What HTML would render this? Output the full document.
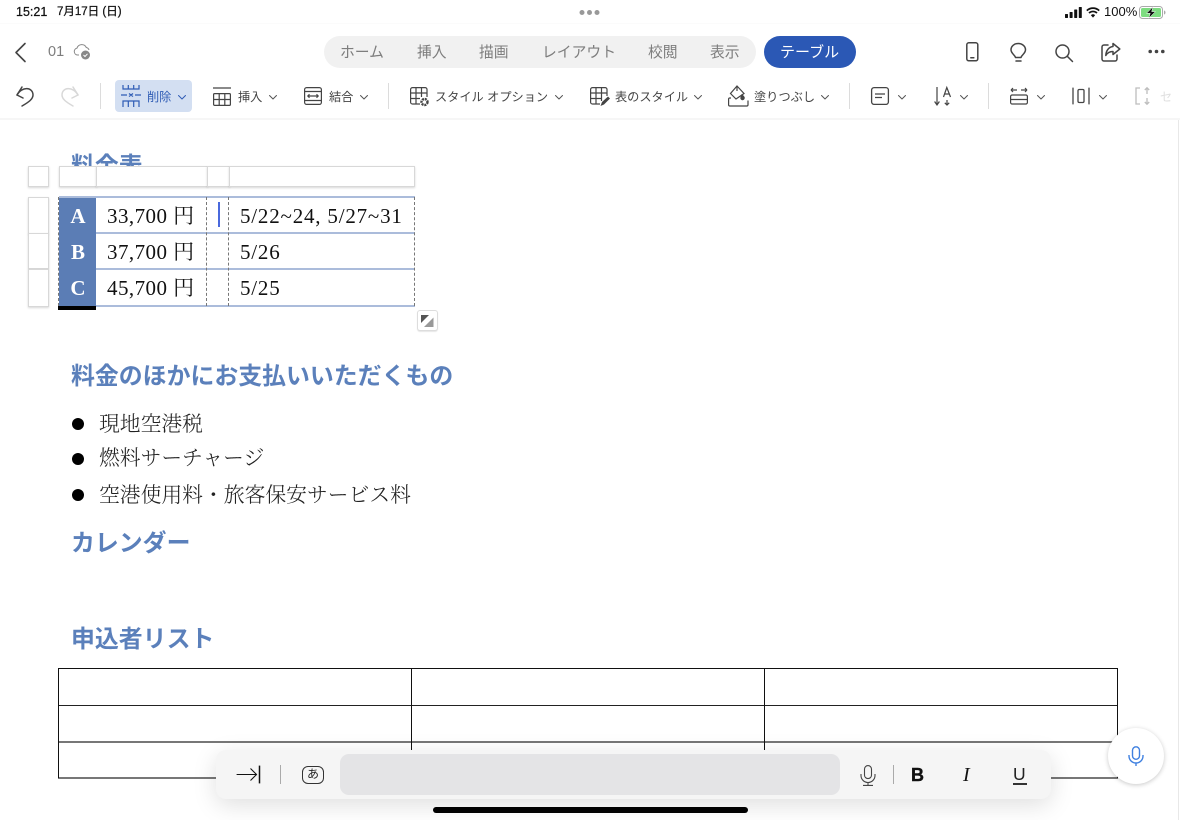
<!DOCTYPE html>
<html lang="ja">
<head>
<meta charset="utf-8">
<style>
html,body{margin:0;padding:0;width:1180px;height:820px;overflow:hidden;background:#fff}
body{position:relative;font-family:"Liberation Sans","Noto Sans CJK JP",sans-serif}
.a{position:absolute;white-space:nowrap}
svg{position:absolute;overflow:visible}
.tab{position:absolute;top:44px;font-size:14.8px;color:#7d7d7d;line-height:18px;white-space:nowrap}
.tb{position:absolute;top:88.5px;font-size:12.2px;color:#444;line-height:16px;white-space:nowrap}
.sep{position:absolute;top:83px;width:1px;height:26px;background:#dcdcdc}
.h{position:absolute;left:71px;font-size:23.9px;font-weight:700;color:#5b80bb;line-height:30px;white-space:nowrap}
.s{position:absolute;font-family:"Liberation Serif","Noto Serif CJK JP",serif;color:#111;white-space:nowrap}
.cell{font-size:21px;line-height:28px}
.amt{letter-spacing:.45px}
.li{left:99px;font-size:20.8px;line-height:28px;font-weight:300;color:#222}
.dot{position:absolute;left:72px;width:12px;height:12px;border-radius:50%;background:#000}
.hd{position:absolute;background:#fff;border:1px solid #d8d8d8;box-sizing:border-box;box-shadow:0 1px 2px rgba(0,0,0,.16)}
.ch{fill:none;stroke:#555;stroke-width:1;stroke-linecap:round;stroke-linejoin:round}
.ic{fill:none;stroke:#444;stroke-width:1.5;stroke-linecap:round;stroke-linejoin:round}
.hl{position:absolute;height:2px;background:#abbcdb}
</style>
</head>
<body>
<!-- document -->
<div class="h" style="top:152px">料金表</div>
<div class="a" style="left:0;top:23px;width:1180px;height:1px;background:#fbfbfb"></div>
<div class="a" style="left:0;top:118px;width:1180px;height:2px;background:#f6f6f6"></div>
<div class="a" style="left:1178px;top:120px;width:1px;height:700px;background:#e8e8e8"></div>

<!-- header strips -->
<div class="hd" style="left:28px;top:166px;width:21px;height:21px"></div>
<div class="hd" style="left:59px;top:166px;width:38px;height:21px"></div>
<div class="hd" style="left:96px;top:166px;width:112px;height:21px"></div>
<div class="hd" style="left:207px;top:166px;width:23px;height:21px"></div>
<div class="hd" style="left:229px;top:166px;width:186px;height:21px"></div>
<div class="hd" style="left:28px;top:197px;width:21px;height:37px"></div>
<div class="hd" style="left:28px;top:233px;width:21px;height:36px"></div>
<div class="hd" style="left:28px;top:269px;width:21px;height:38px"></div>

<!-- pricing table -->
<div class="a" style="left:59px;top:197px;width:37px;height:109px;background:#5b7db5"></div>
<div class="a" style="left:58px;top:306px;width:38px;height:4px;background:#000"></div>
<div class="hl" style="left:59px;top:196px;width:356px"></div>
<div class="hl" style="left:96px;top:232px;width:319px"></div>
<div class="hl" style="left:96px;top:268px;width:319px"></div>
<div class="hl" style="left:96px;top:305px;width:319px"></div>
<div class="a" style="left:58px;top:197px;height:109px;border-left:1px dashed #777"></div>
<div class="a" style="left:206px;top:197px;height:109px;border-left:1px dashed #777"></div>
<div class="a" style="left:228px;top:197px;height:109px;border-left:1px dashed #777"></div>
<div class="a" style="left:414px;top:197px;height:109px;border-left:1px dashed #777"></div>
<div class="a" style="left:218px;top:202px;width:2px;height:25px;background:#4a69dd"></div>

<div class="s cell" style="left:68px;top:202px;width:20px;text-align:center;color:#fff;font-weight:700">A</div>
<div class="s cell" style="left:68px;top:238px;width:20px;text-align:center;color:#fff;font-weight:700">B</div>
<div class="s cell" style="left:68px;top:274px;width:20px;text-align:center;color:#fff;font-weight:700">C</div>
<div class="s cell amt" style="left:107px;top:202px">33,700 円</div>
<div class="s cell amt" style="left:107px;top:238px">37,700 円</div>
<div class="s cell amt" style="left:107px;top:274px">45,700 円</div>
<div class="s cell" style="left:240px;top:202px;letter-spacing:.8px">5/22~24, 5/27~31</div>
<div class="s cell" style="left:240px;top:238px;letter-spacing:.8px">5/26</div>
<div class="s cell" style="left:240px;top:274px;letter-spacing:.8px">5/25</div>

<!-- resize handle -->
<div class="a" style="left:417px;top:310px;width:21px;height:21px;box-sizing:border-box;border:1px solid #ddd;border-radius:3px;box-shadow:0 1px 1px rgba(0,0,0,.1);background:#fff"></div>
<svg style="left:421px;top:315px" width="13" height="12"><path d="M0 0H8L0 8Z" fill="#555"/><path d="M12.500 2.500V12H3Z" fill="#999"/></svg>

<div class="h" style="top:362px">料金のほかにお支払いいただくもの</div>
<div class="dot" style="left:72px;top:418px"></div>
<div class="dot" style="left:72px;top:453px"></div>
<div class="dot" style="left:72px;top:489px"></div>
<div class="s li" style="top:411px">現地空港税</div>
<div class="s li" style="top:445px">燃料サーチャージ</div>
<div class="s li" style="top:482px">空港使用料・旅客保安サービス料</div>
<div class="h" style="top:529px">カレンダー</div>
<div class="h" style="top:625px">申込者リスト</div>

<!-- applicant table -->
<div class="a" style="left:58px;top:668px;width:1060px;height:1px;background:#111"></div>
<div class="a" style="left:58px;top:705px;width:1060px;height:1px;background:#222"></div>
<div class="a" style="left:58px;top:741px;width:1060px;height:2px;background:#777"></div>
<div class="a" style="left:58px;top:777px;width:1060px;height:2px;background:#777"></div>
<div class="a" style="left:58px;top:668px;width:1px;height:110px;background:#111"></div>
<div class="a" style="left:411px;top:668px;width:1px;height:110px;background:#111"></div>
<div class="a" style="left:764px;top:668px;width:1px;height:110px;background:#111"></div>
<div class="a" style="left:1117px;top:668px;width:1px;height:110px;background:#111"></div>

<!-- status bar -->
<div class="a" style="left:16px;top:4px;font-size:12.5px;line-height:16px;color:#111;-webkit-text-stroke:.25px #111">15:21</div>
<div class="a" style="left:57px;top:4px;font-size:11.5px;line-height:16px;color:#111;-webkit-text-stroke:.25px #111">7月17日 (日)</div>
<svg style="left:579px;top:9px" width="22" height="7"><circle cx="3" cy="3.5" r="2.5" fill="#999"/><circle cx="10.5" cy="3.5" r="2.5" fill="#999"/><circle cx="18" cy="3.5" r="2.5" fill="#999"/></svg>
<svg style="left:1065px;top:7px" width="17" height="11"><rect x="0" y="7" width="3" height="4" rx=".6" fill="#111"/><rect x="4.6" y="5" width="3" height="6" rx=".6" fill="#111"/><rect x="9.2" y="2.5" width="3" height="8.5" rx=".6" fill="#111"/><rect x="13.8" y="0" width="3" height="11" rx=".6" fill="#111"/></svg>
<svg style="left:1086px;top:7px" width="14" height="11"><path d="M.8 3.6C4.4.3 9.6.3 13.2 3.6M3 6C5.3 3.9 8.7 3.9 11 6" fill="none" stroke="#111" stroke-width="1.7"/><path d="M4.9 8.2C6.1 7 7.9 7 9.1 8.2L7 10.6Z" fill="#111"/></svg>
<div class="a" style="left:1104px;top:4px;font-size:13px;line-height:16px;color:#111">100%</div>
<svg style="left:1139px;top:6px" width="27" height="13"><rect x=".5" y=".5" width="23" height="12" rx="3" fill="none" stroke="#aaa"/><rect x="2" y="2" width="20" height="9" rx="1.6" fill="#7ddc80"/><path d="M25 4.500C26 4.800 26.500 5.500 26.500 6.500S26 8.200 25 8.500Z" fill="#aaa"/><path d="M14 .8L7.500 7.300H11.200L9.800 12.200L16.500 5.600H12.700Z" fill="#111" stroke="#fff" stroke-width=".5"/></svg>

<!-- title bar -->
<svg style="left:14px;top:42px" width="13" height="21"><path d="M11 1.500L2 10.500L11 19.500" fill="none" stroke="#444" stroke-width="1.6" stroke-linecap="round" stroke-linejoin="round"/></svg>
<div class="a" style="left:48px;top:43px;font-size:14.500px;line-height:18px;color:#7d7d7d">01</div>
<svg style="left:73px;top:43px" width="19" height="18"><path d="M6 12H4.500A3.500 3.500 0 0 1 4 5.100A5 5 0 0 1 13.300 4.500A3.500 3.500 0 0 1 16 7" fill="none" stroke="#888" stroke-width="1"/><circle cx="12.500" cy="12" r="4.500" fill="#888"/><path d="M10.500 12L12 13.500L14.500 10.800" fill="none" stroke="#fff" stroke-width="1"/></svg>

<div class="a" style="left:324px;top:36px;width:432px;height:32px;border-radius:16px;background:#f1f1f1"></div>
<div class="tab" style="left:340px">ホーム</div>
<div class="tab" style="left:417px">挿入</div>
<div class="tab" style="left:479px">描画</div>
<div class="tab" style="left:542px">レイアウト</div>
<div class="tab" style="left:648px">校閲</div>
<div class="tab" style="left:710px">表示</div>
<div class="a" style="left:764px;top:36px;width:92px;height:32px;border-radius:16px;background:#2b58b5"></div>
<div class="tab" style="left:780px;color:#fff;font-size:15px">テーブル</div>

<svg class="ic" style="left:966px;top:42px" width="14" height="20"><rect x=".8" y=".8" width="11" height="18" rx="2"/><path d="M4.800 15.800H7.800"/></svg>
<svg class="ic" style="left:1010px;top:43px" width="17" height="20"><path d="M5.500 14.500C5 12 1 10.500 1 6.800A7.200 6.300 0 0 1 15.500 6.800C15.500 10.500 11.500 12 11 14.500Z"/><path d="M6 18H11"/></svg>
<svg class="ic" style="left:1055px;top:44px" width="18" height="18"><circle cx="7.500" cy="7.500" r="6.500"/><path d="M12.300 12.300L17.500 17.500"/></svg>
<svg class="ic" style="left:1101px;top:42px" width="20" height="20"><path d="M7 3H3A2 2 0 0 0 1 5V17A2 2 0 0 0 3 19H14A2 2 0 0 0 16 17V13"/><path d="M12 1.500L18.800 7L12 12.500V9.500C9 9.500 6.500 10.500 4.800 13.500C5 9 7.500 5 12 4.500Z"/></svg>
<svg style="left:1148px;top:49px" width="17" height="5"><circle cx="2.200" cy="2.500" r="1.800" fill="#444"/><circle cx="8.500" cy="2.500" r="1.800" fill="#444"/><circle cx="14.800" cy="2.500" r="1.800" fill="#444"/></svg>

<!-- ribbon -->
<svg class="ic" style="left:15px;top:85px" width="20" height="22"><path d="M7 2L2 10L8 13"/><path d="M2 10C7 1 18 2 18 10C18 14 14 17 7 21"/></svg>
<svg class="ic" style="left:60px;top:85px;stroke:#d8d8d8" width="20" height="22"><path d="M13 2L18 10L12 13"/><path d="M18 10C13 1 2 2 2 10C2 14 6 17 13 21"/></svg>
<div class="sep" style="left:100px"></div>

<div class="a" style="left:115px;top:80px;width:77px;height:32px;border-radius:4px;background:#d3dff2"></div>
<svg style="left:121px;top:84px" width="20" height="24" fill="none" stroke="#2f5cb5" stroke-width="1.200"><path d="M2 1V5H18V1M7.300 1V5M12.700 1V5"/><path d="M0 11H6M14 11H20M8 9.500L12 12.500M12 9.500L8 12.500"/><path d="M2 23V17H18V23M7.300 17V23M12.700 17V23"/></svg>
<div class="tb" style="left:147px;color:#2f5cb5">削除</div>
<svg class="ch" style="left:178px;top:95px;stroke:#2f5cb5" width="8" height="5"><path d="M.5 .5L4 4L7.500 .5"/></svg>

<svg style="left:213px;top:87px" width="18" height="19" fill="none" stroke="#444" stroke-width="1.200"><path d="M0 1H18"/><rect x=".6" y="6.600" width="16.800" height="11.800" rx="1"/><path d="M.6 12.500H17.400M6.200 6.600V18.400M11.800 6.600V18.400"/></svg>
<div class="tb" style="left:238px">挿入</div>
<svg class="ch" style="left:269px;top:95px" width="8" height="5"><path d="M.5 .5L4 4L7.500 .5"/></svg>

<svg style="left:304px;top:87px" width="18" height="18" fill="none" stroke="#444" stroke-width="1.200"><rect x=".6" y=".6" width="16.800" height="16.800" rx="2"/><path d="M.6 4.500H17.400M.6 13.500H17.400M4 9H14M5.500 7.300L3.800 9L5.500 10.700M12.500 7.300L14.200 9L12.500 10.700"/></svg>
<div class="tb" style="left:329px">結合</div>
<svg class="ch" style="left:360px;top:95px" width="8" height="5"><path d="M.5 .5L4 4L7.500 .5"/></svg>
<div class="sep" style="left:388px"></div>

<svg style="left:410px;top:87px" width="20" height="20" fill="none" stroke="#444" stroke-width="1.200"><path d="M10 17H2.500A1.900 1.900 0 0 1 .6 15.100V2.500A1.900 1.900 0 0 1 2.500 .6H15.100A1.900 1.900 0 0 1 17 2.500V10"/><path d="M.6 6H17M.6 11.500H10M6 .6V17M11.500 .6V10"/><circle cx="14.500" cy="15" r="3" stroke-width="2.400" stroke-dasharray="2 .8"/></svg>
<div class="tb" style="left:435px">スタイル オプション</div>
<svg class="ch" style="left:555px;top:95px" width="8" height="5"><path d="M.5 .5L4 4L7.500 .5"/></svg>

<svg style="left:590px;top:87px" width="20" height="20" fill="none" stroke="#444" stroke-width="1.200"><path d="M10 17H2.500A1.900 1.900 0 0 1 .6 15.100V2.500A1.900 1.900 0 0 1 2.500 .6H15.100A1.900 1.900 0 0 1 17 2.500V9"/><path d="M.6 6H17M.6 11.500H12M6 .6V17M11.500 .6V14"/><path d="M10.500 19L12 15L18 9.500L20 11.500L14 17.500Z" fill="#444" stroke="none"/></svg>
<div class="tb" style="left:615px">表のスタイル</div>
<svg class="ch" style="left:694px;top:95px" width="8" height="5"><path d="M.5 .5L4 4L7.500 .5"/></svg>

<svg style="left:728px;top:85px" width="21" height="22" fill="none" stroke="#444" stroke-width="1.200"><path d="M9 1L16 8.500L8 14L2.500 8.500Z"/><path d="M9 1V6"/><path d="M14 10Q17 12.500 16 13.500A1.500 1.500 0 0 1 13 12.500Z" fill="#444"/><path d="M3 13H1.500A1.200 1.200 0 0 0 .6 14.500V20A1.200 1.200 0 0 0 1.800 21H18.800A1.200 1.200 0 0 0 20 20V15.500"/></svg>
<div class="tb" style="left:754px">塗りつぶし</div>
<svg class="ch" style="left:821px;top:95px" width="8" height="5"><path d="M.5 .5L4 4L7.500 .5"/></svg>
<div class="sep" style="left:849px"></div>

<svg style="left:871px;top:87px" width="18" height="18" fill="none" stroke="#444" stroke-width="1.300"><rect x=".6" y=".6" width="16.800" height="16.800" rx="2.500"/><path d="M4 7H14M4 10.500H11"/></svg>
<svg class="ch" style="left:898px;top:95px" width="8" height="5"><path d="M.5 .5L4 4L7.500 .5"/></svg>

<svg style="left:934px;top:86px" width="18" height="20" fill="none" stroke="#444" stroke-width="1.200"><path d="M3 1V19M.6 15.500L3 19L5.400 15.500M13 14V19M10.800 16.800L13 19L15.200 16.800"/><path d="M9.500 11L12.800 1.500L16.500 11M10.500 8H15.500"/></svg>
<svg class="ch" style="left:960px;top:95px" width="8" height="5"><path d="M.5 .5L4 4L7.500 .5"/></svg>
<div class="sep" style="left:988px"></div>

<svg style="left:1010px;top:87px" width="18" height="18" fill="none" stroke="#444" stroke-width="1.200"><path d="M1 3H7M1 3L3 1M1 3L3 5M11 3H17M17 3L15 1M17 3L15 5"/><rect x=".6" y="8" width="16.800" height="9" rx="1.500"/><path d="M.6 12.500H17.400"/></svg>
<svg class="ch" style="left:1037px;top:95px" width="8" height="5"><path d="M.5 .5L4 4L7.500 .5"/></svg>

<svg style="left:1072px;top:87px" width="18" height="18" fill="none" stroke="#444" stroke-width="1.300"><path d="M1 .6V17.400M17 .6V17.400"/><rect x="6" y="2.500" width="6" height="13" rx="1.200"/></svg>
<svg class="ch" style="left:1099px;top:95px" width="8" height="5"><path d="M.5 .5L4 4L7.500 .5"/></svg>

<svg style="left:1135px;top:87px" width="18" height="18" fill="none" stroke="#bdbdbd" stroke-width="1.300"><path d="M5 1H1V17H5"/><path d="M12 1V7M9.800 3L12 .8L14.200 3M12 11V17M9.800 15L12 17.200L14.200 15"/></svg>
<div class="tb" style="left:1160px;color:#e0e0e0">セ</div>

<!-- accessory bar -->
<div class="a" style="left:216px;top:750px;width:835px;height:49px;border-radius:10px;background:#f5f5f5;box-shadow:0 6px 24px rgba(0,0,0,.13)"></div>
<svg style="left:236px;top:765px" width="25" height="19" fill="none" stroke="#111"><path d="M.6 9.500H20M14.500 3.500L20.500 9.500L14.500 15.500" stroke-width="1.100"/><path d="M23.500 .6V18.400" stroke-width="1.500"/></svg>
<div class="a" style="left:280px;top:765px;width:1px;height:19px;background:#aaa"></div>
<div class="a" style="left:302px;top:766px;width:22px;height:18px;box-sizing:border-box;border:1.300px solid #333;border-radius:6px;font-size:12px;line-height:15px;text-align:center;color:#222">あ</div>
<div class="a" style="left:340px;top:754px;width:500px;height:41px;border-radius:9px;background:#e4e4e6"></div>
<svg style="left:860px;top:765px" width="16" height="21" fill="none" stroke="#444" stroke-width="1.100"><rect x="4.500" y=".6" width="7" height="13" rx="3.500"/><path d="M1 9V10.500A7 7 0 0 0 15 10.500V9M8 17.500V20M3 20.400H13"/></svg>
<div class="a" style="left:893px;top:765px;width:1px;height:19px;background:#aaa"></div>
<div class="a" style="left:911px;top:764px;font-size:18px;line-height:22px;font-weight:700;color:#111;-webkit-text-stroke:.4px #111">B</div>
<div class="a" style="left:963px;top:764px;font-family:'Liberation Serif',serif;font-size:20px;line-height:22px;font-style:italic;color:#111">I</div>
<div class="a" style="left:1013px;top:764px;font-size:17.500px;line-height:20px;color:#222">U</div>
<div class="a" style="left:1013px;top:783px;width:14px;height:1.500px;background:#333"></div>

<div class="a" style="left:433px;top:807px;width:315px;height:6px;border-radius:3px;background:#000"></div>

<!-- floating mic -->
<div class="a" style="left:1108px;top:728px;width:56px;height:56px;border-radius:50%;background:#fff;box-shadow:0 1px 5px rgba(0,0,0,.22)"></div>
<svg style="left:1128px;top:746px" width="16" height="20" fill="none" stroke="#3f80e0" stroke-width="1.400"><rect x="4.500" y=".8" width="7" height="12.500" rx="3.500"/><path d="M1 9V10A7 7 0 0 0 15 10V9M8 17V20"/></svg>
</body>
</html>
